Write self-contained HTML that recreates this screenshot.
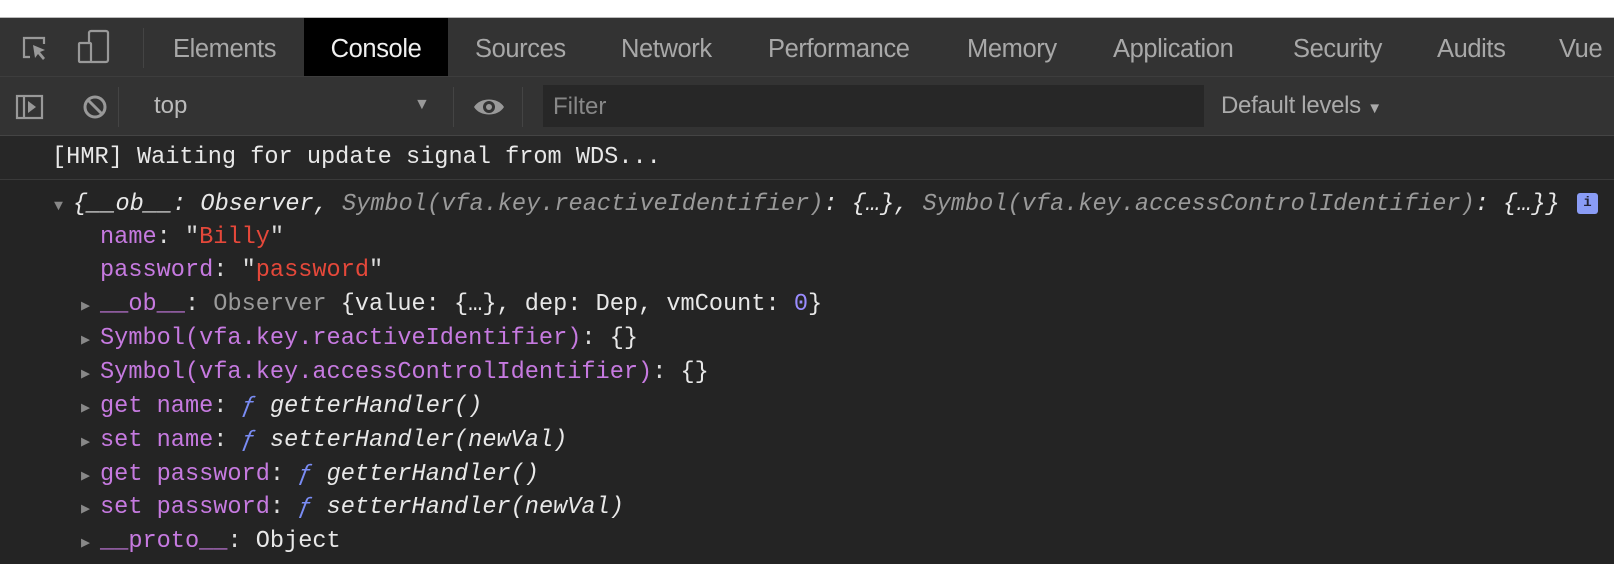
<!DOCTYPE html>
<html><head><meta charset="utf-8"><style>
*{margin:0;padding:0;box-sizing:border-box}
body{width:1614px;height:564px;overflow:hidden;background:#242424;font-family:"Liberation Sans",sans-serif;position:relative}
.top{position:absolute;left:0;top:0;width:1614px;height:18px;background:#fff;border-bottom:1px solid #bbb}
.tabs{position:absolute;left:0;top:18px;width:1614px;height:59px;background:#333;border-bottom:1px solid #3d3d3d}
.tab{position:absolute;top:0;height:58px;line-height:62px;font-size:25.5px;color:#a8a8a8;letter-spacing:-0.4px}
.tab.active{background:#000;color:#f0f0f0}
.tb{position:absolute;left:0;top:77px;width:1614px;height:59px;background:#333;border-bottom:1px solid #444}
.mono{font-family:"Liberation Mono",monospace;font-size:23.6px;white-space:pre;position:absolute;color:#ddd}
.k{color:#c67ae0}.s{color:#e5483a}.g{color:#9a9a9a}.w{color:#e8e8e8}.f{color:#7a8cf4;font-style:italic}.n{color:#9a8cff}
.tri{color:#888;font-size:15px;display:inline-block;width:19px}
</style></head><body>
<div class="top"></div>
<div class="tabs">
<svg style="position:absolute;left:20px;top:15px" width="30" height="30" viewBox="0 0 30 30" fill="none" stroke="#999" stroke-width="2.2"><path d="M10 24H4V5h20v6"/><path d="M13 12l12 5-5 2 5 6-2 2-5-6-3 4z" fill="#999" stroke="none"/></svg>
<svg style="position:absolute;left:75px;top:11px" width="36" height="36" viewBox="0 0 36 36" fill="none" stroke="#999" stroke-width="2.2"><rect x="14" y="2" width="19" height="31" rx="2"/><rect x="4" y="14" width="12" height="19" rx="1" fill="#333"/></svg>
<div style="position:absolute;left:143px;top:10px;width:1px;height:40px;background:#444"></div>
<div class="tab" style="left:173px">Elements</div>
<div class="tab active" style="left:304px;width:144px;text-align:center">Console</div>
<div class="tab" style="left:475px">Sources</div>
<div class="tab" style="left:621px">Network</div>
<div class="tab" style="left:768px">Performance</div>
<div class="tab" style="left:967px">Memory</div>
<div class="tab" style="left:1113px">Application</div>
<div class="tab" style="left:1293px">Security</div>
<div class="tab" style="left:1437px">Audits</div>
<div class="tab" style="left:1559px">Vue</div>
</div>
<div class="tb">
<svg style="position:absolute;left:15px;top:17px" width="30" height="26" viewBox="0 0 30 26" fill="none" stroke="#999" stroke-width="2.2"><rect x="2" y="2" width="25" height="22"/><line x1="9" y1="2" x2="9" y2="24"/><path d="M13 7l8 6-8 6z" fill="#999" stroke="none"/></svg>
<svg style="position:absolute;left:82px;top:17px" width="26" height="26" viewBox="0 0 26 26" fill="none" stroke="#999" stroke-width="3"><circle cx="13" cy="13" r="10"/><line x1="6" y1="6" x2="20" y2="20"/></svg>
<div style="position:absolute;left:118px;top:10px;width:1px;height:40px;background:#444"></div>
<div style="position:absolute;left:154px;top:0;line-height:58px;font-size:24px;color:#bbb">top</div>
<div style="position:absolute;left:414px;top:0;line-height:56px;font-size:16px;color:#999">▼</div>
<div style="position:absolute;left:453px;top:10px;width:1px;height:40px;background:#444"></div>
<svg style="position:absolute;left:472px;top:18px" width="34" height="24" viewBox="0 0 34 24"><path d="M2 12C8 2 26 2 32 12C26 22 8 22 2 12z" fill="#999"/><circle cx="17" cy="12" r="6" fill="#333"/><circle cx="17" cy="12" r="3" fill="#999"/></svg>
<div style="position:absolute;left:522px;top:10px;width:1px;height:40px;background:#444"></div>
<div style="position:absolute;left:543px;top:8px;width:661px;height:42px;background:#272727"></div>
<div style="position:absolute;left:553px;top:0;line-height:60px;font-size:24px;color:#888">Filter</div>
<div style="position:absolute;left:1221px;top:0;line-height:58px;font-size:24px;color:#aaa;letter-spacing:-0.3px">Default levels <span style="font-size:15px">▼</span></div>
</div>
<div style="position:absolute;left:0;top:136px;width:1614px;height:44px;background:#272727;border-bottom:1px solid #3a3a3a"></div>
<div class="mono w" style="left:52px;top:144px">[HMR] Waiting for update signal from WDS...</div>
<div class="mono" style="left:54px;top:191px"><span class="tri">▼</span><i class="w">{__ob__: Observer, <span class="g">Symbol(vfa.key.reactiveIdentifier)</span>: {…}, <span class="g">Symbol(vfa.key.accessControlIdentifier)</span>: {…}}</i></div>
<div style="position:absolute;left:1577px;top:193px;width:21px;height:21px;background:#8a9cf5;border-radius:3px;color:#223;font:bold 14px 'Liberation Mono',monospace;text-align:center;line-height:21px">i</div>
<div class="mono" style="left:100px;top:224px"><span class="k">name</span>: "<span class="s">Billy</span>"</div>
<div class="mono" style="left:100px;top:257px"><span class="k">password</span>: "<span class="s">password</span>"</div>
<div class="mono" style="left:81px;top:291px"><span class="tri">▶</span><span class="k">__ob__</span>: <span class="g">Observer</span> <span class="w">{value: {…}, dep: Dep, vmCount: <span class="n">0</span>}</span></div>
<div class="mono" style="left:81px;top:325px"><span class="tri">▶</span><span class="k">Symbol(vfa.key.reactiveIdentifier)</span>: <span class="w">{}</span></div>
<div class="mono" style="left:81px;top:359px"><span class="tri">▶</span><span class="k">Symbol(vfa.key.accessControlIdentifier)</span>: <span class="w">{}</span></div>
<div class="mono" style="left:81px;top:393px"><span class="tri">▶</span><span class="k">get name</span>: <span class="f">ƒ</span> <i class="w">getterHandler()</i></div>
<div class="mono" style="left:81px;top:427px"><span class="tri">▶</span><span class="k">set name</span>: <span class="f">ƒ</span> <i class="w">setterHandler(newVal)</i></div>
<div class="mono" style="left:81px;top:461px"><span class="tri">▶</span><span class="k">get password</span>: <span class="f">ƒ</span> <i class="w">getterHandler()</i></div>
<div class="mono" style="left:81px;top:494px"><span class="tri">▶</span><span class="k">set password</span>: <span class="f">ƒ</span> <i class="w">setterHandler(newVal)</i></div>
<div class="mono" style="left:81px;top:528px"><span class="tri">▶</span><span class="k">__proto__</span>: <span class="w">Object</span></div>
</body></html>
